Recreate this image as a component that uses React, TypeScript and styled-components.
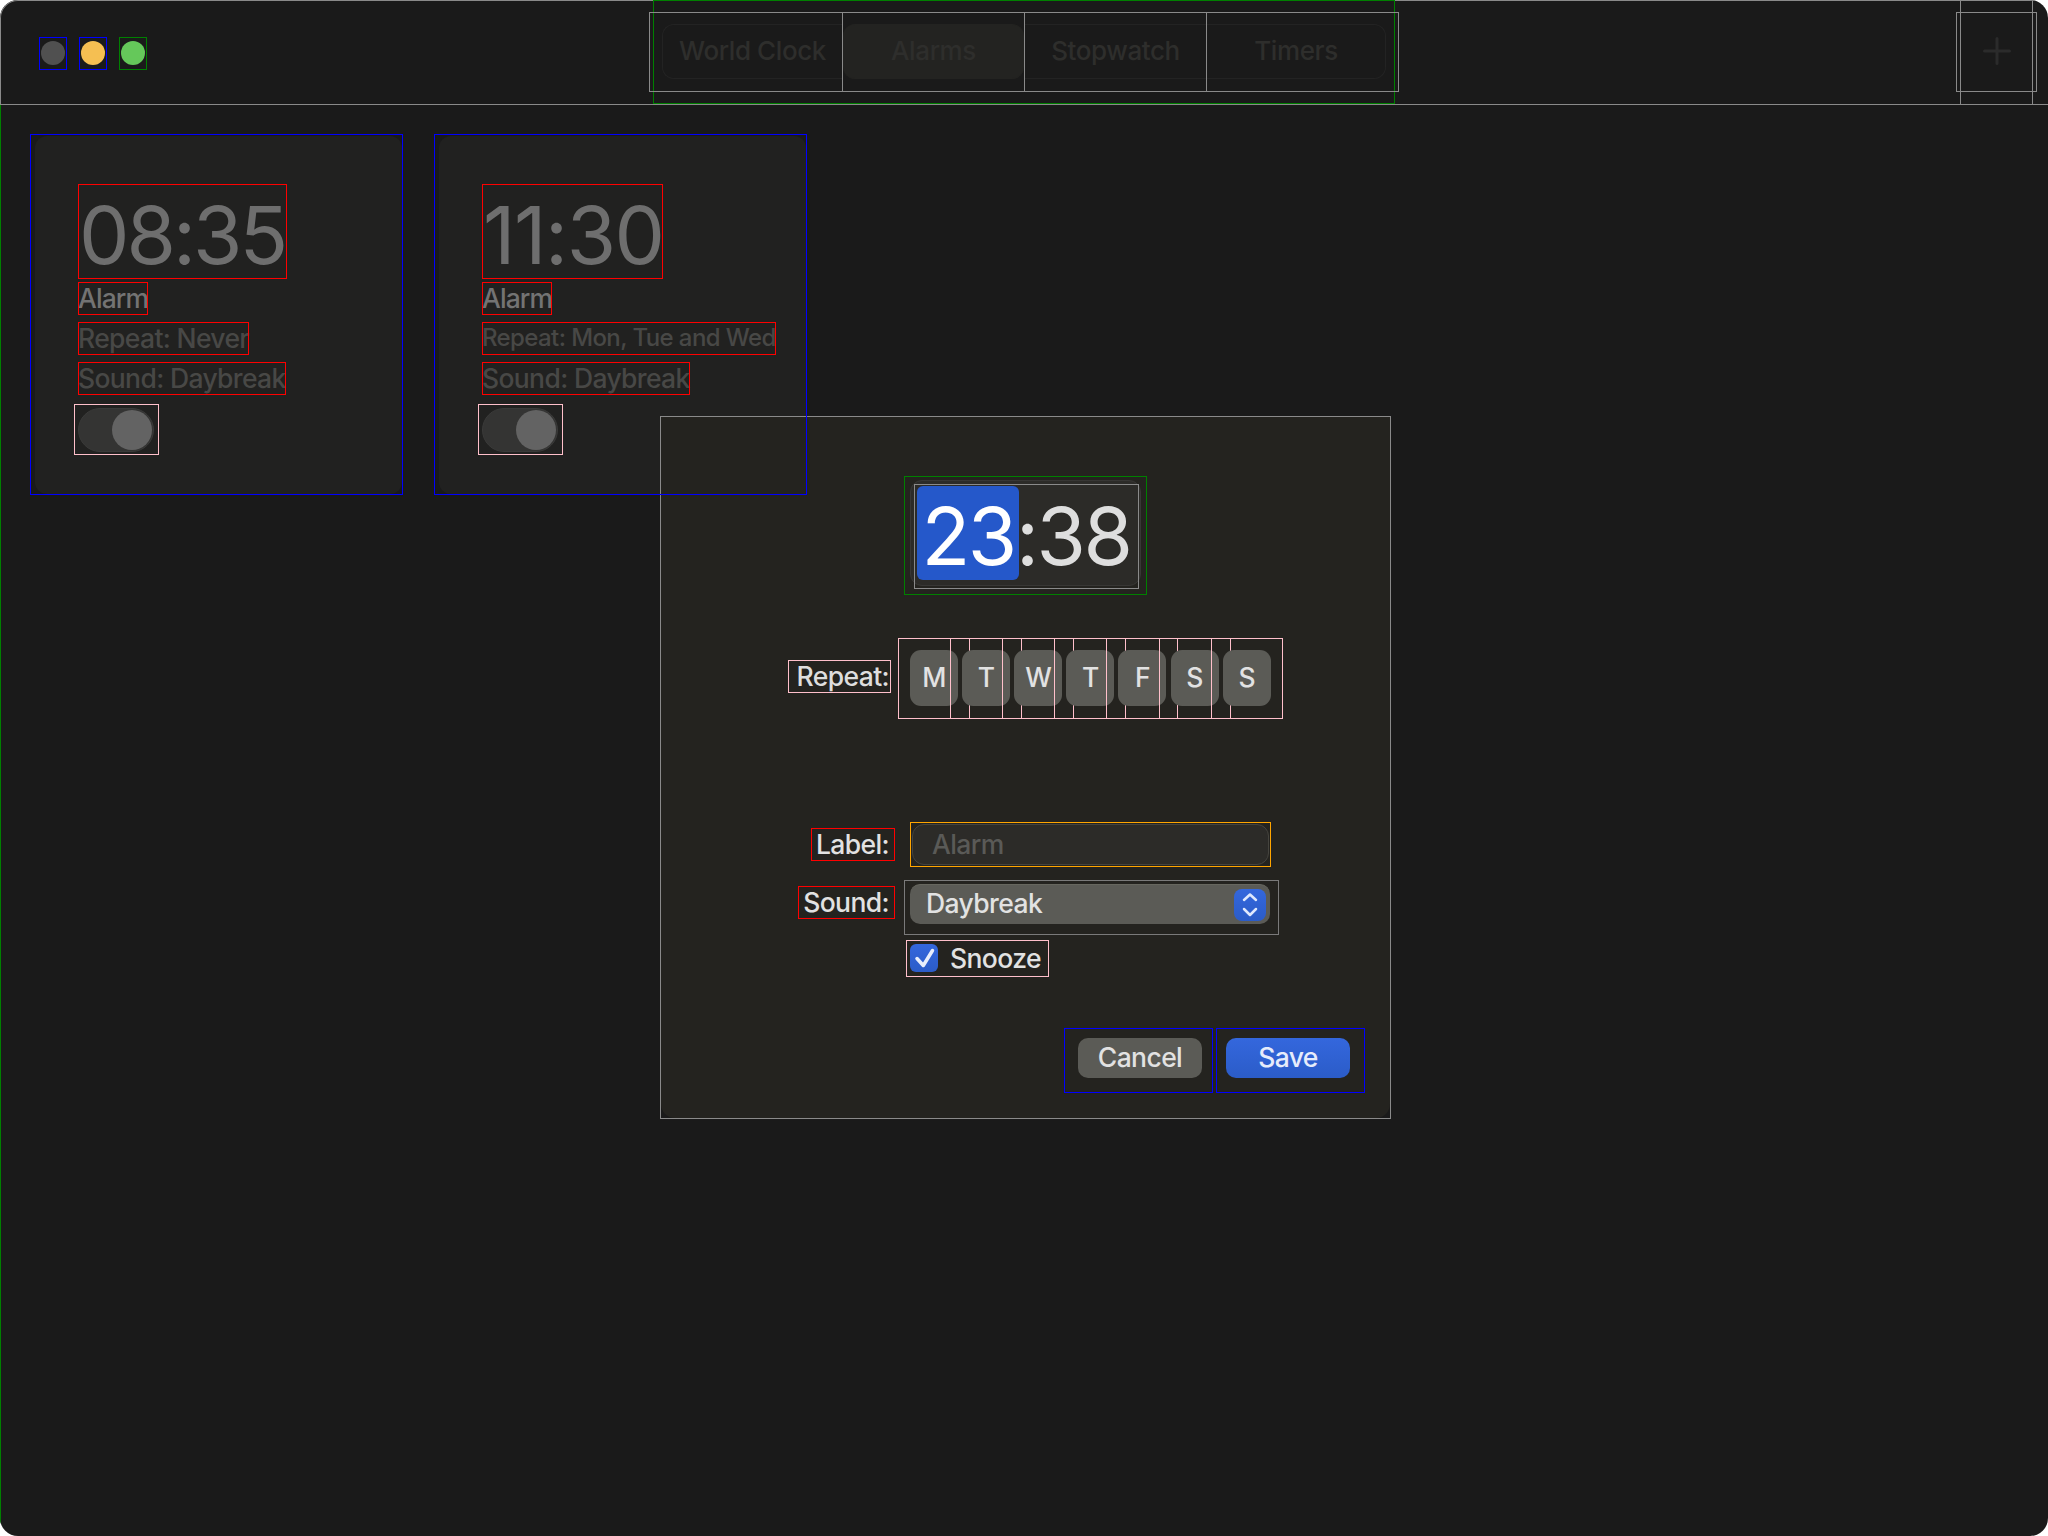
import React from 'react';
import styled, { createGlobalStyle } from 'styled-components';

const DAYS = ['M', 'T', 'W', 'T', 'F', 'S', 'S'];
const TABS = ['World Clock', 'Alarms', 'Stopwatch', 'Timers'];

const ALARMS = [
  { time: '08:35', width: 209, spacing: -3, repeat: 'Repeat: Never', small: false },
  { time: '11:30', width: 181, spacing: -1.5, repeat: 'Repeat: Mon, Tue and Wed', small: true },
];

const GlobalStyle = createGlobalStyle`
  html, body {
    margin: 0;
    background: #fff;
  }
  * {
    box-sizing: border-box;
  }
`;

const App: React.FC = () => {
  return (
    <Window>
      <GlobalStyle />
      <Header>
        <Lights>
          <LightBox $frame="#0000ff"><Light $color="#505050" /></LightBox>
          <LightBox $frame="#0000ff"><Light $color="#f5bf52" /></LightBox>
          <LightBox $frame="#008000"><Light $color="#65c85a" /></LightBox>
        </Lights>
        <TabsHost>
          <TabsFrame>
            {TABS.map((tab, i) => (
              <TabCell key={tab} $first={i === 0} $last={i === TABS.length - 1}>
                <TabPill $first={i === 0} $last={i === TABS.length - 1} $active={tab === 'Alarms'}>
                  {tab}
                </TabPill>
              </TabCell>
            ))}
          </TabsFrame>
        </TabsHost>
        <AddHost>
          <AddFrame>
            <svg width="28" height="28" viewBox="0 0 28 28">
              <path d="M14 1.500v25M1.500 14h25" stroke="#2b2b2b" strokeWidth="3" strokeLinecap="round" />
            </svg>
          </AddFrame>
        </AddHost>
      </Header>

      <Main>
        {ALARMS.map((alarm) => (
          <Card key={alarm.time}>
            <CardBody>
              <TimeText $width={alarm.width} $spacing={alarm.spacing}>
                {alarm.time}
              </TimeText>
              <AlarmName>Alarm</AlarmName>
              <Detail $small={alarm.small}>{alarm.repeat}</Detail>
              <Detail>Sound: Daybreak</Detail>
              <ToggleBox>
                <Track>
                  <Thumb />
                </Track>
              </ToggleBox>
            </CardBody>
          </Card>
        ))}
      </Main>

      <Dialog>
        <DialogBody>
          <TimeHost>
            <TimeField>
              <TimeFrame>
                <TimeHour>23</TimeHour>
                <TimeColon>:</TimeColon>
                <TimeMinute>38</TimeMinute>
              </TimeFrame>
            </TimeField>
          </TimeHost>

          <RepeatRow>
            <RepeatLabel>Repeat:</RepeatLabel>
            <Days>
              {DAYS.map((day, i) => (
                <DayBox key={i}>
                  <DayButton>{day}</DayButton>
                </DayBox>
              ))}
            </Days>
          </RepeatRow>

          <LabelRow>
            <LabelCol>
              <FieldLabel>Label:</FieldLabel>
            </LabelCol>
            <InputBox>
              <Input>Alarm</Input>
            </InputBox>
          </LabelRow>

          <SoundRow>
            <LabelCol>
              <FieldLabel>Sound:</FieldLabel>
            </LabelCol>
            <SelectBox>
              <Select>
                <SelectValue>Daybreak</SelectValue>
                <Stepper>
                  <svg width="32" height="32" viewBox="0 0 32 32" fill="none">
                    <path
                      d="M10 11l6-5.500 6 5.500M10 20l6 6 6-6"
                      stroke="#dfe8fd"
                      strokeWidth="2.500"
                      strokeLinecap="round"
                      strokeLinejoin="round"
                    />
                  </svg>
                </Stepper>
              </Select>
            </SelectBox>
          </SoundRow>

          <SnoozeBox>
            <Check>
              <svg width="28" height="28" viewBox="0 0 28 28" fill="none">
                <path
                  d="M7 14.500l6.300 7L22.500 6.500"
                  stroke="#e8eefc"
                  strokeWidth="3.500"
                  strokeLinecap="round"
                  strokeLinejoin="round"
                />
              </svg>
            </Check>
            Snooze
          </SnoozeBox>

          <Footer>
            <ButtonBox>
              <Button>Cancel</Button>
            </ButtonBox>
            <ButtonBox $primary>
              <Button $primary>Save</Button>
            </ButtonBox>
          </Footer>
        </DialogBody>
      </Dialog>
    </Window>
  );
};

export default App;

const Window = styled.div`
  position: relative;
  display: flex;
  flex-direction: column;
  width: 2048px;
  height: 1536px;
  overflow: hidden;
  background: #1a1a1a;
  border-radius: 18px;
  font-family: Inter, 'Liberation Sans', sans-serif;
  font-size: 26.500px;
  font-weight: 450;
  letter-spacing: -0.600px;
  white-space: nowrap;
`;

const Header = styled.header`
  display: flex;
  flex: none;
  align-items: center;
  height: 105px;
  padding-left: 38px;
  border: 1px solid #8a8a8a;
  border-width: 1px 0 1px 1px;
  border-radius: 18px 0 0 0;
`;

const Lights = styled.div`
  display: flex;
  flex: none;
  gap: 12px;
  margin-top: 1px;
`;

const LightBox = styled.div<{ $frame: string }>`
  display: flex;
  justify-content: center;
  align-items: center;
  width: 28px;
  height: 33px;
  border: 1px solid ${(props) => props.$frame};
`;

const Light = styled.span<{ $color: string }>`
  display: block;
  width: 24px;
  height: 24px;
  border-radius: 50%;
  background: ${(props) => props.$color};
`;

const TabsHost = styled.div`
  display: flex;
  flex: none;
  justify-content: center;
  align-items: center;
  width: 742px;
  height: 104px;
  margin-left: 506px;
  margin-top: -1px;
  border: 1px solid #008000;
`;

const TabsFrame = styled.div`
  display: flex;
  flex: none;
  width: 750px;
  height: 80px;
  border: 1px solid #8a8a8a;
  font-size: 26px;
  letter-spacing: -0.400px;
`;

const TabCell = styled.div<{ $first: boolean; $last: boolean }>`
  flex: ${(props) => (props.$last ? '1' : 'none')};
  width: ${(props) => (props.$first ? 192 : 182)}px;
  padding: 11px ${(props) => (props.$last ? 12 : 0)}px 12px ${(props) => (props.$first ? 12 : 0)}px;
  border-left: ${(props) => (props.$first ? 'none' : '1px solid #8a8a8a')};
`;

const TabPill = styled.div<{ $first: boolean; $last: boolean; $active: boolean }>`
  display: flex;
  justify-content: center;
  align-items: center;
  height: 100%;
  padding-bottom: 3px;
  color: #2e2e2c;
  background: ${(props) => (props.$active ? '#232321' : 'transparent')};
  border: 1px solid ${(props) => (props.$active ? '#232321' : '#232323')};
  border-width: 1px ${(props) => (props.$last ? 1 : 0)}px 1px ${(props) => (props.$first ? 1 : 0)}px;
  border-radius: ${(props) =>
    props.$active ? '12px' : props.$first ? '12px 0 0 12px' : props.$last ? '0 12px 12px 0' : '0'};
`;

const AddHost = styled.div`
  display: flex;
  flex: none;
  align-items: center;
  width: 73px;
  height: 104px;
  margin-left: auto;
  margin-right: 15px;
  margin-top: -1px;
  border-left: 1px solid #8a8a8a;
  border-right: 1px solid #8a8a8a;
`;

const AddFrame = styled.div`
  display: flex;
  flex: none;
  justify-content: center;
  align-items: center;
  width: 81px;
  height: 80px;
  margin-left: -5px;
  padding-bottom: 3px;
  border: 1px solid #8a8a8a;
`;

const Main = styled.main`
  display: flex;
  flex: 1;
  gap: 31px;
  padding: 29px 0 0 29px;
  border-left: 1px solid #008000;
`;

const Card = styled.section`
  position: relative;
  flex: none;
  width: 373px;
  height: 361px;
  padding: 2px 1px 1px 5px;

  &::after {
    content: '';
    position: absolute;
    inset: 0;
    z-index: 2;
    border: 1px solid #0000ff;
    pointer-events: none;
  }
`;

const CardBody = styled.div`
  display: flex;
  flex-direction: column;
  align-items: flex-start;
  height: 100%;
  padding: 48px 0 0 43px;
  background: #212120;
  border-radius: 12px;
`;

const TimeText = styled.div<{ $width: number; $spacing: number }>`
  width: ${(props) => props.$width}px;
  height: 95px;
  padding-top: 4px;
  border: 1px solid #ff0000;
  color: #6e6e6e;
  font-size: 80px;
  font-weight: 380;
  letter-spacing: ${(props) => props.$spacing}px;
  line-height: 92px;
`;

const AlarmName = styled.div`
  height: 33px;
  margin-top: 3px;
  outline: 1px solid #ff0000;
  outline-offset: -1px;
  color: #737373;
  letter-spacing: -0.900px;
  line-height: 33px;
`;

const Detail = styled.div<{ $small?: boolean }>`
  height: 33px;
  margin-top: 7px;
  outline: 1px solid #ff0000;
  outline-offset: -1px;
  color: #484846;
  font-size: ${(props) => (props.$small ? 24 : 26.5)}px;
  letter-spacing: ${(props) => (props.$small ? -0.6 : -0.65)}px;
  line-height: ${(props) => (props.$small ? 31 : 33)}px;
`;

const ToggleBox = styled.div`
  display: flex;
  align-items: center;
  width: 85px;
  height: 51px;
  margin: 9px 0 0 -4px;
  padding-left: 3px;
  border: 1px solid #ffc0cb;
`;

const Track = styled.div`
  display: flex;
  justify-content: flex-end;
  align-items: center;
  width: 76px;
  height: 44px;
  padding-right: 1px;
  background: #343433;
  border: 1px solid #3a3a39;
  border-radius: 22px;
`;

const Thumb = styled.span`
  display: block;
  width: 40px;
  height: 40px;
  border-radius: 50%;
  background: #636363;
`;

const Dialog = styled.div`
  position: absolute;
  left: 660px;
  top: 416px;
  z-index: 1;
  width: 731px;
  height: 703px;
  border: 1px solid #8a8a8a;
  background: #1a1a1a;
`;

const DialogBody = styled.div`
  display: flex;
  flex-direction: column;
  align-items: flex-start;
  height: 100%;
  background: #24231f;
  border-radius: 0 0 14px 14px;
`;

const TimeHost = styled.div`
  width: 243px;
  height: 119px;
  margin: 59px 0 0 243px;
  padding: 3px 0 0 5px;
  border: 1px solid #008000;
`;

const TimeField = styled.div`
  width: 231px;
  height: 106px;
  padding: 3px 0 0 3px;
  background: #2c2b28;
  border: 1px solid #383735;
  border-radius: 12px;
`;

const TimeFrame = styled.div`
  display: flex;
  align-items: flex-start;
  width: 225px;
  height: 105px;
  padding: 1px 0 0 2px;
  border: 1px solid #8a8a8a;
  font-size: 80px;
  font-weight: 380;
  letter-spacing: -2.500px;
  line-height: 99px;
`;

const TimeHour = styled.span`
  display: block;
  width: 102px;
  height: 94px;
  color: #fff;
  text-align: center;
  background: #2558ca;
  border-radius: 6px;
`;

const TimeColon = styled.span`
  display: block;
  margin-left: -3px;
  color: #dedede;
`;

const TimeMinute = styled.span`
  color: #dedede;
`;

const RepeatRow = styled.div`
  display: flex;
  align-items: flex-start;
  margin: 43px 0 0 127px;
`;

const RepeatLabel = styled.div`
  display: flex;
  justify-content: flex-end;
  align-items: center;
  width: 103px;
  height: 33px;
  margin: 22px 7px 0 0;
  padding: 0 1px 2px 0;
  border: 1px solid #ffc0cb;
  color: #dedede;
`;

const Days = styled.div`
  display: flex;
`;

const DayBox = styled.div`
  flex: none;
  width: 72px;
  height: 81px;
  padding: 11px;
  border: 1px solid #ffc0cb;

  & + & {
    margin-left: -19.900px;
  }
`;

const DayButton = styled.div`
  display: flex;
  justify-content: center;
  align-items: center;
  width: 48px;
  height: 56px;
  padding-bottom: 2px;
  background: #5b5b56;
  border-radius: 11px;
  color: #e2e2e2;
`;

const LabelCol = styled.div`
  display: flex;
  justify-content: flex-end;
  flex: none;
  width: 95px;
  margin-left: 139px;
`;

const FieldLabel = styled.div`
  display: flex;
  align-items: center;
  height: 33px;
  padding: 0 5px 2px 4px;
  border: 1px solid #ff0000;
  color: #e2e2e2;
`;

const LabelRow = styled.div`
  display: flex;
  align-items: flex-start;
  margin-top: 103px;

  ${FieldLabel} {
    margin-top: 6px;
  }
`;

const InputBox = styled.div`
  width: 361px;
  height: 45px;
  margin-left: 15px;
  padding: 1px;
  border: 1px solid #ffa500;
`;

const Input = styled.div`
  display: flex;
  align-items: center;
  height: 41px;
  padding: 0 0 2px 19px;
  color: #5a5a57;
  background: #2c2b28;
  border: 1px solid #45443f;
  border-radius: 12px;
`;

const SoundRow = styled.div`
  display: flex;
  align-items: flex-start;
  margin-top: 13px;

  ${FieldLabel} {
    margin-top: 6px;
  }
`;

const SelectBox = styled.div`
  width: 375px;
  height: 55px;
  margin-left: 9px;
  padding: 3px 0 0 5px;
  border: 1px solid #7a7a7a;
`;

const Select = styled.div`
  display: flex;
  justify-content: space-between;
  align-items: center;
  width: 360px;
  height: 40px;
  padding: 0 4px 0 16px;
  color: #e2e2e2;
  background: #5b5b56;
  border-top: 1px solid #67675f;
  border-radius: 10px;
`;

const SelectValue = styled.span`
  padding-bottom: 3px;
`;

const Stepper = styled.span`
  display: block;
  width: 32px;
  height: 32px;
  background: linear-gradient(#3467dd, #2b5cc8);
  border-radius: 8px;
`;

const SnoozeBox = styled.div`
  display: flex;
  align-items: center;
  gap: 12px;
  width: 143px;
  height: 37px;
  margin: 5px 0 0 245px;
  padding: 0 0 1px 3px;
  border: 1px solid #ffc0cb;
  color: #e2e2e2;
`;

const Check = styled.span`
  display: block;
  flex: none;
  width: 28px;
  height: 28px;
  background: linear-gradient(#3467dd, #2b5cc8);
  border-radius: 6px;
`;

const Footer = styled.div`
  display: flex;
  gap: 3px;
  align-self: flex-end;
  margin: auto 25px 25px 0;
`;

const ButtonBox = styled.div<{ $primary?: boolean }>`
  width: 149px;
  height: 65px;
  padding: 9px 0 0 ${(props) => (props.$primary ? 9 : 13)}px;
  border: 1px solid #0000ff;
`;

const Button = styled.div<{ $primary?: boolean }>`
  display: flex;
  justify-content: center;
  align-items: center;
  width: 124px;
  height: 40px;
  padding-bottom: 2px;
  color: ${(props) => (props.$primary ? '#e6ecfb' : '#e2e2e2')};
  background: ${(props) => (props.$primary ? 'linear-gradient(#3467dd, #2b5cc8)' : '#5b5b56')};
  border-radius: 10px;
`;
